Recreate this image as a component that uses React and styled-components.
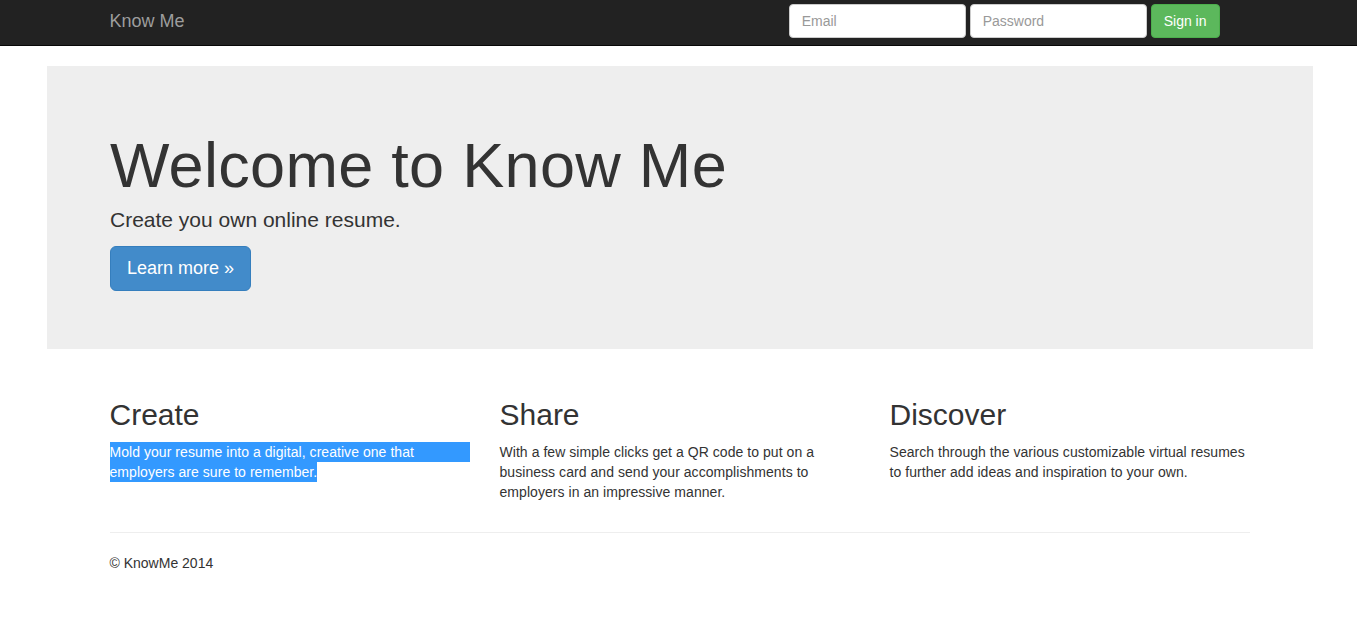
import React from "react";
import styled, { createGlobalStyle } from "styled-components";

const GlobalStyle = createGlobalStyle`
  * { box-sizing: border-box; }
  body {
    margin: 0;
    font-family: "Liberation Sans", Arial, sans-serif;
    font-size: 14px;
    line-height: 20px;
    color: #333;
    background: #fff;
  }
`;

const Navbar = styled.nav`
  height: 46px;
  background: #222;
  border-bottom: 1px solid #080808;
`;

const Container = styled.div`
  width: 1170px;
  margin: 0 0 0 calc(50% - 584px);
  padding: 0 15px;
`;

const NavInner = styled(Container)`
  display: flex;
  justify-content: space-between;
  align-items: flex-start;
  padding-top: 4px;
`;

const Brand = styled.a`
  font-size: 18px;
  line-height: 20px;
  color: #9d9d9d;
  text-decoration: none;
  margin-top: 7px;
`;

const SignInForm = styled.form`
  display: flex;
  gap: 4px;
  margin-right: 30px;
`;

const Input = styled.input`
  width: 177px;
  height: 34px;
  padding: 6px 12px;
  font-family: inherit;
  font-size: 14px;
  color: #555;
  background: #fff;
  border: 1px solid #ccc;
  border-radius: 4px;
  outline: none;
  &::placeholder { color: #999; }
`;

const Button = styled.button`
  font-family: inherit;
  color: #fff;
  cursor: pointer;
  background: ${(p) => (p.$variant === "success" ? "#5cb85c" : "#428bca")};
  border: 1px solid ${(p) => (p.$variant === "success" ? "#4cae4c" : "#357ebd")};
  border-radius: ${(p) => (p.$large ? "6px" : "4px")};
  font-size: ${(p) => (p.$large ? "18px" : "14px")};
  line-height: ${(p) => (p.$large ? "23px" : "20px")};
  padding: ${(p) => (p.$large ? "10px 16px" : "6px 12px")};
  height: ${(p) => (p.$large ? "45px" : "34px")};
`;

const Jumbotron = styled.section`
  background: #eee;
  margin: 20px 44px 30px 47px;
  padding: 48px 0;
`;

const JumboInner = styled.div`
  width: 1170px;
  margin: 0 auto;
  padding: 0 15px;
`;

const Title = styled.h1`
  font-size: 63px;
  font-weight: 500;
  line-height: 1.1;
  margin: 17px 0 5px;
  letter-spacing: 0.3px;
`;

const Lead = styled.p`
  font-size: 21px;
  font-weight: 200;
  line-height: 30px;
  margin: 0 0 11px;
`;

const ActionRow = styled.p`
  margin: 0 0 10px;
`;

const Row = styled.div`
  display: grid;
  grid-template-columns: repeat(3, 1fr);
  margin: 0 -15px;
`;

const Column = styled.div`
  padding: 0 15px;
`;

const Heading = styled.h2`
  font-size: 30px;
  font-weight: 500;
  line-height: 33px;
  margin: 19px 0 11px;
`;

const Text = styled.p`
  margin: 0 0 10px;
  letter-spacing: 0.05px;
  ${(p) =>
    p.$selected &&
    `background: linear-gradient(#3399ff, #3399ff) no-repeat left top / 100% 20px;`}
`;

const Selected = styled.span`
  background: #3399ff;
  color: #fff;
  padding: 2px 0;
  -webkit-box-decoration-break: clone;
  box-decoration-break: clone;
`;

const Rule = styled.hr`
  margin: 20px 0;
  border: 0;
  border-top: 1px solid #eee;
`;

const Footer = styled.footer`
  p { margin: 0 0 10px; }
`;

const features = [
  {
    title: "Create",
    text: "Mold your resume into a digital, creative one that employers are sure to remember.",
    selected: true,
  },
  {
    title: "Share",
    text: "With a few simple clicks get a QR code to put on a business card and send your accomplishments to employers in an impressive manner.",
  },
  {
    title: "Discover",
    text: "Search through the various customizable virtual resumes to further add ideas and inspiration to your own.",
  },
];

export default function App() {
  return (
    <>
      <GlobalStyle />
      <Navbar>
        <NavInner>
          <Brand href="#">Know Me</Brand>
          <SignInForm onSubmit={(e) => e.preventDefault()}>
            <Input type="text" placeholder="Email" />
            <Input type="password" placeholder="Password" />
            <Button type="submit" $variant="success">Sign in</Button>
          </SignInForm>
        </NavInner>
      </Navbar>

      <Jumbotron>
        <JumboInner>
          <Title>Welcome to Know Me</Title>
          <Lead>Create you own online resume.</Lead>
          <ActionRow>
            <Button $large>Learn more &raquo;</Button>
          </ActionRow>
        </JumboInner>
      </Jumbotron>

      <Container>
        <Row>
          {features.map((f) => (
            <Column key={f.title}>
              <Heading>{f.title}</Heading>
              {f.selected ? (
                <Text $selected>
                  <Selected>{f.text}</Selected>
                </Text>
              ) : (
                <Text>{f.text}</Text>
              )}
            </Column>
          ))}
        </Row>
        <Rule />
        <Footer>
          <p>&copy; KnowMe 2014</p>
        </Footer>
      </Container>
    </>
  );
}
